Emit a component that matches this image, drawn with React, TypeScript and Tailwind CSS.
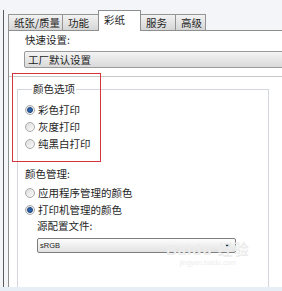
import React from 'react';
import clsx from 'clsx';

const cjk = { fontFamily: '"Microsoft YaHei", "Noto Sans CJK SC", sans-serif' };

interface RadioRowProps {
    label: string;
    checked?: boolean;
}

const RadioRow: React.FC<RadioRowProps> = ({ label, checked = false }) => (
    <div className="flex items-center h-[17px] gap-[3px]">
        {/* Win7 style radio */}
        <span className="w-[10px] h-[10px] rounded-full border border-[#a9a9a9] bg-gradient-to-br from-[#dcdcdc] to-[#fbfbfb] flex items-center justify-center shrink-0">
            {checked && (
                <span className="w-[6px] h-[6px] rounded-full bg-[#2c62a8] border border-[#1d4680]" />
            )}
        </span>
        <span className="text-[10.5px] leading-[14px] text-[#1e1e1e]">{label}</span>
    </div>
);

interface TabProps {
    label: string;
    width: string;
    active?: boolean;
}

const Tab: React.FC<TabProps> = ({ label, width, active = false }) => (
    <div
        className={clsx(
            "flex items-center pl-[5px] text-[10.5px] text-[#1e1e1e] border border-b-0 -ml-px first:ml-0",
            width,
            active
                ? "h-[21px] bg-white border-[#8e8f8f] relative z-10 -mb-px pb-[2px]"
                : "h-[16px] bg-gradient-to-b from-[#f2f2f2] to-[#d6d6d6] border-[#949494]"
        )}
    >
        {label}
    </div>
);

export default function App() {
    return (
        <div className="w-[282px] h-[291px] bg-[#f3f5f8] flex flex-col overflow-hidden relative" style={cjk}>
            {/* Dialog area */}
            <div className="h-[287px] pt-[10px] pl-[3px] flex">
                <div className="flex-1 border-l border-[#5a5a5a] pl-[4px] flex flex-col min-w-0">
                    {/* Tabs */}
                    <div className="h-[20px] flex items-end">
                        <Tab label="纸张/质量" width="w-[55px]" />
                        <Tab label="功能" width="w-[37px]" />
                        <Tab label="彩纸" width="w-[43px]" active />
                        <Tab label="服务" width="w-[36px]" />
                        <Tab label="高级" width="w-[31px]" />
                    </div>

                    {/* Tab panel */}
                    <div className="flex-1 bg-white border-t border-l border-[#8e8f8f] flex flex-col overflow-hidden">
                        <div className="pl-[16px] mt-[2px] text-[10.5px] leading-[14px] text-[#1e1e1e]">快速设置:</div>
                        <div className="ml-[15px] mt-[4px] w-[270px] h-[17px] shrink-0 rounded-[2px] border border-[#9a9a9a] bg-gradient-to-b from-[#f4f4f4] to-[#d9d9d9] flex items-center pl-[3px] text-[10.5px] text-[#1e1e1e]">
                            工厂默认设置
                        </div>
                        <div className="mt-[8px] h-px bg-[#c9c9c9] shrink-0" />

                        {/* Colour options group */}
                        <fieldset className="ml-[8px] mt-[5px] w-[252px] flex-1 border border-b-0 border-[#d3d7dc] pl-[7px]">
                            <legend className="ml-[7px] px-[1px] text-[10.5px] leading-[14px] text-[#1e1e1e]">颜色选项</legend>
                            <div className="pt-[5px]">
                                <RadioRow label="彩色打印" checked />
                                <RadioRow label="灰度打印" />
                                <RadioRow label="纯黑白打印" />
                            </div>

                            <div className="mt-[15px] text-[10.5px] leading-[14px] text-[#1e1e1e]">颜色管理:</div>
                            <div className="mt-[3px]">
                                <RadioRow label="应用程序管理的颜色" />
                                <RadioRow label="打印机管理的颜色" checked />
                            </div>
                            <div className="pl-[12px] mt-[1px] text-[10.5px] leading-[14px] text-[#1e1e1e]">源配置文件:</div>
                            <div className="ml-[12px] mt-[5px] w-[199px] h-[15px] rounded-[2px] border border-[#7d7d7d] bg-gradient-to-b from-[#fdfdfd] to-[#e2e2e2] flex items-center justify-between pl-[2px] pr-[4px]">
                                <span className="text-[7.5px] text-[#222]" style={{ fontFamily: '"Liberation Sans", Arial, sans-serif' }}>sRGB</span>
                                <svg width="6" height="4" viewBox="0 0 6 4">
                                    <path d="M0 0 H6 L3 4 Z" fill="#111" />
                                </svg>
                            </div>
                        </fieldset>
                    </div>
                </div>
            </div>
            <div className="flex-1 bg-[#e8eef6]" />

            {/* Red annotation box */}
            <div className="absolute left-[12px] top-[73px] w-[89px] h-[89px] border border-[#d5343d]" />

            {/* Watermark */}
            <div className="absolute left-[166px] top-[241px] flex flex-col items-center pointer-events-none">
                <span className="text-[15px] font-bold leading-[16px] text-[#ececec] tracking-[1px]" style={{ fontFamily: '"Liberation Sans", Arial, sans-serif' }}>
                    Baidu <span style={cjk}>经验</span>
                </span>
                <span className="text-[7px] leading-[10px] text-[#ededed]" style={{ fontFamily: '"Liberation Sans", Arial, sans-serif' }}>jingyan.baidu.com</span>
            </div>
        </div>
    );
}
